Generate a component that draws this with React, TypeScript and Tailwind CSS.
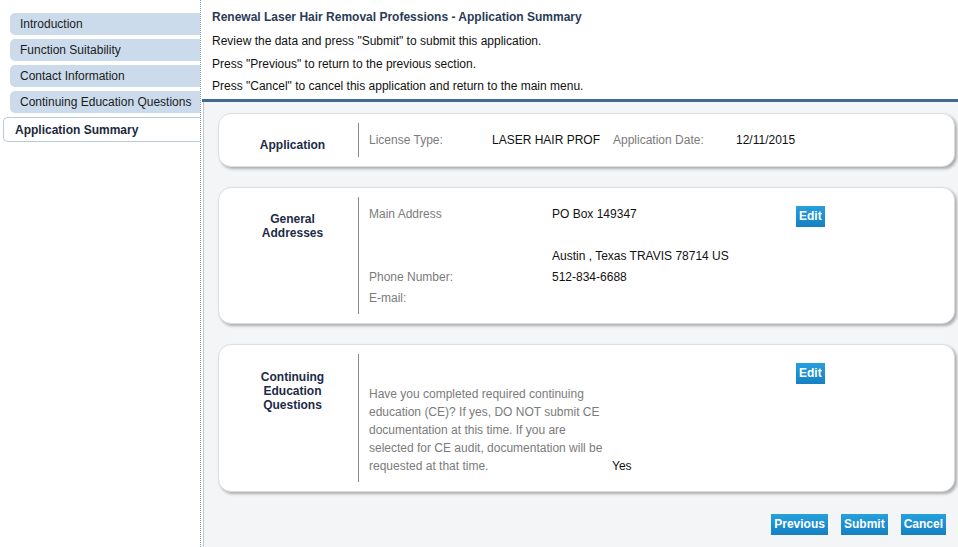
import React from "react";

const font = { fontFamily: '"Liberation Sans", Arial, sans-serif' };

function Btn({ children }: { children: React.ReactNode }) {
  return (
    <button className="h-[21px] px-[3px] bg-gradient-to-b from-[#26a0de] to-[#1580c2] text-white font-bold text-[12px] leading-[21px] cursor-pointer">
      {children}
    </button>
  );
}

function Card({
  label,
  height,
  labelPt,
  children,
}: {
  label: React.ReactNode;
  height: string;
  labelPt: string;
  children: React.ReactNode;
}) {
  return (
    <div className="bg-white border border-[#dedede] rounded-[13px] py-[9px] shadow-[2px_2px_3px_rgba(0,0,0,0.3)]">
      <div className={`flex ${height}`}>
        <div className={`w-[139px] shrink-0 pl-[8px] text-center font-bold text-[12px] leading-[14px] text-[#1d2b47] ${labelPt}`}>
          {label}
        </div>
        <div className="border-l border-[#8a8a8a] pl-[10px] flex-1">{children}</div>
      </div>
    </div>
  );
}

export default function App() {
  const nav = [
    "Introduction",
    "Function Suitability",
    "Contact Information",
    "Continuing Education Questions",
  ];
  return (
    <div className="flex h-[547px] w-[958px] bg-white text-[12px] overflow-hidden" style={font}>
      <div className="w-[201px] shrink-0 border-r border-dotted border-[#7f9cbd] pt-[13px] flex flex-col gap-[4px]">
        {nav.map((n) => (
          <div
            key={n}
            className="ml-[10px] h-[22px] leading-[22px] bg-[#cbdbec] rounded-l-[5px] pl-[10px] text-[#1b1b1b] whitespace-nowrap"
          >
            {n}
          </div>
        ))}
        <div className="ml-[3px] h-[25px] leading-[24px] bg-white border border-r-0 border-[#b3cbe0] rounded-l-[5px] pl-[11px] font-bold text-[#1b2a3e]">
          Application Summary
        </div>
      </div>
      <div className="flex-1 flex flex-col pl-[1px]">
        <div className="pl-[10px] pt-[9px] text-[#111]">
          <div className="font-bold leading-[16px] text-[#2a3b57]">
            Renewal Laser Hair Removal Professions - Application Summary
          </div>
          <div className="mt-[5px] leading-[22.5px]">Review the data and press "Submit" to submit this application.</div>
          <div className="leading-[22.5px]">Press "Previous" to return to the previous section.</div>
          <div className="leading-[22.5px]">Press "Cancel" to cancel this application and return to the main menu.</div>
        </div>
        <div className="mt-[1.5px] h-[3px] bg-[#416a93]" />
        <div className="flex-1 ml-[1px] border-l border-[#c8c8c8] bg-[#f4f5f7] pl-[14px] pr-[3px] pt-[11px] flex flex-col gap-[20px]">
          <Card label="Application" height="h-[34px]" labelPt="pt-[15px]">
            <div className="flex pt-[7px] leading-[21px]">
              <div className="w-[123px] text-[#7b7b7b]">License Type:</div>
              <div className="w-[121px] text-[#111]">LASER HAIR PROF</div>
              <div className="w-[123px] text-[#7b7b7b]">Application Date:</div>
              <div className="text-[#111]">12/11/2015</div>
            </div>
          </Card>
          <Card
            label={
              <>
                General
                <br />
                Addresses
              </>
            }
            height="h-[117px]"
            labelPt="pt-[15px]"
          >
            <div className="flex pt-[7px] leading-[21px]">
              <div className="w-[183px] text-[#7b7b7b]">
                <div>Main Address</div>
                <div>&nbsp;</div>
                <div>&nbsp;</div>
                <div>Phone Number:</div>
                <div>E-mail:</div>
              </div>
              <div className="w-[244px] text-[#111]">
                <div>PO Box 149347</div>
                <div>&nbsp;</div>
                <div>Austin , Texas TRAVIS 78714 US</div>
                <div>512-834-6688</div>
                <div>&nbsp;</div>
              </div>
              <div className="pt-[2px]">
                <Btn>Edit</Btn>
              </div>
            </div>
          </Card>
          <Card
            label={
              <>
                Continuing
                <br />
                Education
                <br />
                Questions
              </>
            }
            height="h-[128px]"
            labelPt="pt-[16px]"
          >
            <div className="pt-[9px]">
              <div className="pl-[427px] h-[22px]">
                <Btn>Edit</Btn>
              </div>
              <div className="flex items-end leading-[18px]">
                <div className="w-[243px] text-[#7b7b7b]">
                  Have you completed required continuing education (CE)? If yes, DO NOT submit CE documentation at this time. If you are selected for CE audit, documentation will be requested at that time.
                </div>
                <div className="text-[#111]">Yes</div>
              </div>
            </div>
          </Card>
          <div className="flex justify-end gap-[13px] pr-[9px] pt-[2px]">
            <Btn>Previous</Btn>
            <Btn>Submit</Btn>
            <Btn>Cancel</Btn>
          </div>
        </div>
      </div>
    </div>
  );
}
